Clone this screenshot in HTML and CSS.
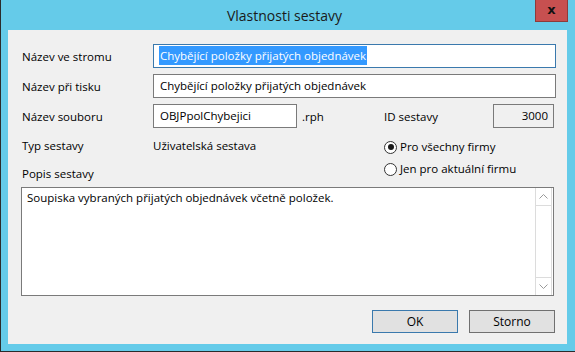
FILE: index.html
```html
<!DOCTYPE html>
<html lang="cs">
<head>
  <meta charset="UTF-8">
  <title>Vlastnosti sestavy</title>
  <link rel="stylesheet" href="styles.css">
</head>
<body>
  <div class="window">
    <div class="titlebar">
      <span class="title">Vlastnosti sestavy</span>
      <button class="close">x</button>
    </div>

    <div class="client">
      <div class="fields">
        <div class="row">
          <span class="label">Název ve stromu</span>
          <div class="field focused"><span class="selected">Chybějící položky přijatých objednávek</span></div>
        </div>
        <div class="row">
          <span class="label">Název při tisku</span>
          <div class="field">Chybějící položky přijatých objednávek</div>
        </div>
        <div class="row">
          <span class="label">Název souboru</span>
          <div class="field file">OBJPpolChybejici</div>
          <span class="ext">.rph</span>
          <span class="idlabel">ID sestavy</span>
          <div class="field idfield">3000</div>
        </div>
      </div>

      <div class="middle">
        <div class="left">
          <div class="typ">
            <span class="label">Typ sestavy</span>
            <span>Uživatelská sestava</span>
          </div>
          <div class="popis">Popis sestavy</div>
        </div>
        <div class="radios">
          <div class="option"><span class="radio checked"></span>Pro všechny firmy</div>
          <div class="option"><span class="radio"></span>Jen pro aktuální firmu</div>
        </div>
      </div>

      <div class="memo">
        <div class="memo-text">Soupiska vybraných přijatých objednávek včetně položek.</div>
        <div class="scroll">
          <div class="arrow up">
            <svg width="9" height="5" viewBox="0 0 9 5"><path d="M0.5 4.5 L4.5 0.5 L8.5 4.5" fill="none" stroke="#9a9a9a" stroke-width="1"/></svg>
          </div>
          <div class="track"></div>
          <div class="arrow down">
            <svg width="9" height="5" viewBox="0 0 9 5"><path d="M0.5 0.5 L4.5 4.5 L8.5 0.5" fill="none" stroke="#9a9a9a" stroke-width="1"/></svg>
          </div>
        </div>
      </div>

      <div class="buttons">
        <button class="btn default">OK</button>
        <button class="btn">Storno</button>
      </div>
    </div>
  </div>
</body>
</html>
```

FILE: styles.css
```css
* {
  box-sizing: border-box;
}
body {
  margin: 0;
  background: #65cbe9;
  font-family: "Open Sans", "Noto Sans", sans-serif;
  font-size: 11.5px;
  color: #000;
}
.window {
  width: 575px;
  height: 352px;
  background: #65cbe9;
  border-left: 1px solid #2b2b2b;
  border-bottom: 1px solid #2b2b2b;
  display: flex;
  flex-direction: column;
}
.titlebar {
  height: 30px;
  display: grid;
  grid-template-columns: 1fr auto 1fr;
  padding-right: 7px;
}
.title {
  grid-column: 2;
  font-size: 14px;
  line-height: 31px;
  color: #1a1a1a;
}
.close {
  grid-column: 3;
  justify-self: end;
  align-self: start;
  width: 33px;
  height: 22px;
  margin: 0;
  padding: 0 0 3px;
  background: #c75050;
  border: 1px solid #8e3b3b;
  border-top: none;
  font-family: "DejaVu Sans", sans-serif;
  font-size: 13px;
  font-weight: bold;
  color: #111;
}
.client {
  flex: 1;
  margin: 0 8px 7px 7px;
  background: #f0f0f0;
  padding: 14px 11px 0 14px;
  display: flex;
  flex-direction: column;
}
.fields {
  display: flex;
  flex-direction: column;
  gap: 6px;
}
.row {
  display: flex;
  align-items: center;
  height: 24px;
}
.label {
  width: 131px;
  flex-shrink: 0;
}
.field {
  flex: 1;
  height: 24px;
  line-height: 22px;
  padding: 0 6px;
  background: #fff;
  border: 1px solid #7a7a7a;
  white-space: nowrap;
}
.field.focused {
  border-color: #3a79ad;
  padding-left: 5px;
}
.selected {
  background: #3399ff;
  color: #fff;
  padding: 2px 1px;
}
.field.file {
  flex: none;
  width: 144px;
}
.ext {
  width: 87px;
  padding-left: 5px;
}
.idlabel {
  flex: 1;
}
.field.idfield {
  flex: none;
  width: 61px;
  margin-right: 2px;
  background: #f0f0f0;
  text-align: right;
  padding-right: 5px;
}
.middle {
  display: flex;
  line-height: 20px;
}
.left {
  width: 362px;
  padding-top: 8px;
}
.typ {
  display: flex;
}
.popis {
  margin-top: 8px;
}
.radios {
  padding-top: 9px;
  display: flex;
  flex-direction: column;
  gap: 2px;
}
.option {
  display: flex;
  align-items: center;
  gap: 3px;
}
.radio {
  width: 13px;
  height: 13px;
  border: 1px solid #333;
  border-radius: 50%;
  background: #fff;
  display: flex;
  align-items: center;
  justify-content: center;
}
.radio.checked::after {
  content: "";
  width: 6px;
  height: 6px;
  border-radius: 50%;
  background: #1a1a1a;
}
.memo {
  margin: 3px 2px 0 -1px;
  height: 109px;
  background: #fff;
  border: 1px solid #7a7a7a;
  display: flex;
  padding-right: 1px;
}
.memo-text {
  flex: 1;
  padding: 2px 5px;
}
.scroll {
  width: 17px;
  border: 1px solid #dcdcdc;
  border-bottom: none;
  border-top: none;
  display: flex;
  flex-direction: column;
}
.arrow {
  height: 18px;
  display: flex;
  align-items: center;
  justify-content: center;
}
.arrow.up {
  border-bottom: 1px solid #dcdcdc;
}
.arrow.down {
  border-top: 1px solid #dcdcdc;
}
.track {
  flex: 1;
}
.buttons {
  display: flex;
  justify-content: flex-end;
  gap: 11px;
  margin-top: 14px;
  margin-right: 1px;
}
.btn {
  width: 86px;
  height: 23px;
  background: #e1e1e1;
  border: 1px solid #707070;
  font-family: "Open Sans", "Noto Sans", sans-serif;
  font-size: 12px;
  color: #000;
  padding: 0 0 1px;
}
.btn.default {
  border-color: #3a79ad;
}
```
